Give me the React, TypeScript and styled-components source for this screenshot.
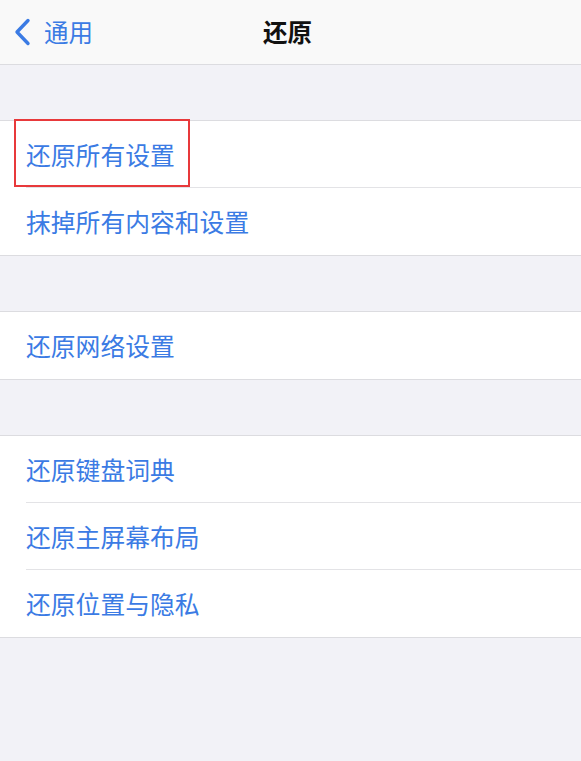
import { FC } from 'react';
import styled, { createGlobalStyle } from 'styled-components';

const GlobalStyle = createGlobalStyle`
  html, body {
    margin: 0;
    padding: 0;
    background: #f2f2f7;
  }
  body {
    font-family: "Noto Sans CJK SC", "Noto Sans", sans-serif;
    -webkit-font-smoothing: antialiased;
  }
`;

const Page = styled.div`
  width: 581px;
  min-height: 761px;
  background: #f2f2f7;
  display: flex;
  flex-direction: column;
`;

const NavBar = styled.header`
  height: 65px;
  box-sizing: border-box;
  background: #f9f9f9;
  border-bottom: 1px solid #dcdce0;
  display: grid;
  grid-template-columns: 1fr auto 1fr;
  align-items: center;
  padding: 0 14px;
`;

const BackButton = styled.div`
  display: flex;
  align-items: center;
  gap: 13px;
  color: #3b7be4;
  font-size: 24.5px;
  line-height: 1;
`;

const Title = styled.h1`
  margin: 0 6px 0 0;
  font-size: 24.5px;
  font-weight: 600;
  color: #111;
  line-height: 1;
`;

const Content = styled.main`
  display: flex;
  flex-direction: column;
  gap: 55px;
  padding-top: 55px;
`;

const Group = styled.section`
  background: #fff;
  border-top: 1px solid #dcdce0;
  border-bottom: 1px solid #dcdce0;
  display: flex;
  flex-direction: column;
`;

const Row = styled.div<{ $last?: boolean }>`
  height: 67px;
  box-sizing: border-box;
  margin-left: 26px;
  display: flex;
  align-items: center;
  border-bottom: ${({ $last }) => ($last ? 'none' : '1px solid #e3e3e6')};
  position: relative;
`;

const Label = styled.span`
  font-size: 24.8px;
  color: #3b7be4;
  line-height: 1;
`;

const Highlight = styled.div`
  position: absolute;
  left: -12px;
  top: -2px;
  width: 176px;
  height: 68px;
  box-sizing: border-box;
  border: 2px solid #e8393b;
  pointer-events: none;
`;

const Chevron: FC = () => (
  <svg width="17" height="28" viewBox="0 0 17 28" fill="none">
    <path
      d="M14 2.5 L3 14 L14 25.5"
      stroke="#3b7be4"
      strokeWidth="3.4"
      strokeLinecap="round"
      strokeLinejoin="round"
    />
  </svg>
);

const groups: { label: string; marked?: boolean }[][] = [
  [{ label: '还原所有设置', marked: true }, { label: '抹掉所有内容和设置' }],
  [{ label: '还原网络设置' }],
  [{ label: '还原键盘词典' }, { label: '还原主屏幕布局' }, { label: '还原位置与隐私' }],
];

export default function App() {
  return (
    <Page>
      <GlobalStyle />
      <NavBar>
        <BackButton>
          <Chevron />
          <span>通用</span>
        </BackButton>
        <Title>还原</Title>
        <div />
      </NavBar>
      <Content>
        {groups.map((rows, gi) => (
          <Group key={gi}>
            {rows.map((row, ri) => (
              <Row key={row.label} $last={ri === rows.length - 1}>
                {row.marked && <Highlight />}
                <Label>{row.label}</Label>
              </Row>
            ))}
          </Group>
        ))}
      </Content>
    </Page>
  );
}
